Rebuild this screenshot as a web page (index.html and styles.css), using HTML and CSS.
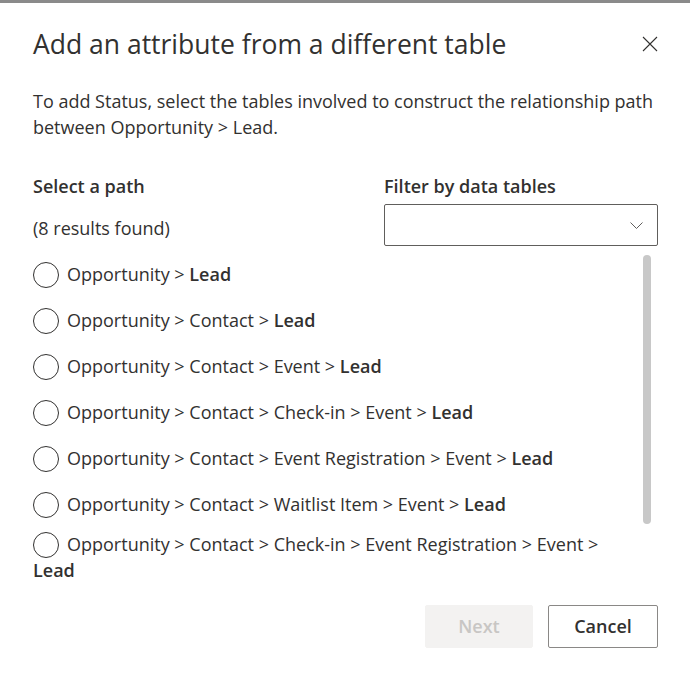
FILE: index.html
```html
<!DOCTYPE html>
<html lang="en">

<head>
  <meta charset="UTF-8">
  <meta name="viewport" content="width=device-width, initial-scale=1.0">
  <title>Add an attribute from a different table</title>
  <link rel="stylesheet" href="styles.css">
</head>

<body>
  <div class="dialog">
    <div class="dialog-head">
      <h1 class="dialog-title">Add an attribute from a different table</h1>
      <a class="close-btn" href="javascript:void(0)" aria-label="Close">
        <svg width="16" height="16" viewBox="0 0 16 16">
          <path d="M1 1 L15 15 M15 1 L1 15" stroke="#323130" stroke-width="1.1" fill="none" />
        </svg>
      </a>
    </div>

    <p class="dialog-desc">To add Status, select the tables involved to construct the relationship path between Opportunity &gt; Lead.</p>

    <div class="picker">
      <div class="label">Select a path</div>
      <div class="label">Filter by data tables</div>
      <div class="count">(8 results found)</div>
      <div class="dropdown">
        <svg width="13" height="7" viewBox="0 0 13 7">
          <path d="M0.5 0.5 L6.5 6.5 L12.5 0.5" stroke="#605e5c" stroke-width="1" fill="none" />
        </svg>
      </div>
    </div>

    <div class="path-list">
      <div class="path-item"><span><i class="radio"></i>Opportunity &gt; <b>Lead</b></span></div>
      <div class="path-item"><span><i class="radio"></i>Opportunity &gt; Contact &gt; <b>Lead</b></span></div>
      <div class="path-item"><span><i class="radio"></i>Opportunity &gt; Contact &gt; Event &gt; <b>Lead</b></span></div>
      <div class="path-item"><span><i class="radio"></i>Opportunity &gt; Contact &gt; Check-in &gt; Event &gt; <b>Lead</b></span></div>
      <div class="path-item"><span><i class="radio"></i>Opportunity &gt; Contact &gt; Event Registration &gt; Event &gt; <b>Lead</b></span></div>
      <div class="path-item"><span><i class="radio"></i>Opportunity &gt; Contact &gt; Waitlist Item &gt; Event &gt; <b>Lead</b></span></div>
      <div class="path-item"><span><i class="radio"></i>Opportunity &gt; Contact &gt; Check-in &gt; Event Registration &gt; Event &gt; <b>Lead</b></span></div>
      <div class="scroll-thumb"></div>
    </div>

    <div class="dialog-foot">
      <button class="btn btn-disabled" disabled>Next</button>
      <button class="btn btn-cancel">Cancel</button>
    </div>
  </div>
</body>

</html>
```

FILE: styles.css
```css
body {
  margin: 0;
  padding: 0;
  background: #fff;
  color: #323130;
  font-family: "Open Sans", "Noto Sans", sans-serif;
  font-size: 18px;
}

.dialog {
  border-top: 3px solid #8a8a8a;
  padding: 0 32px 0 33px;
}

.dialog-head {
  display: flex;
  align-items: center;
  justify-content: space-between;
  padding-top: 25px;
}

.dialog-title {
  margin: 0;
  font-size: 26.5px;
  font-weight: 400;
  line-height: 32px;
}

.close-btn {
  display: flex;
}

.dialog-desc {
  margin: 28px 0 0;
  line-height: 26px;
}

.picker {
  display: grid;
  grid-template-columns: 1fr 274px;
  column-gap: 14px;
  margin-top: 35px;
}

.label {
  font-weight: 600;
  line-height: 22px;
  margin-bottom: 7px;
}

.count {
  align-self: center;
  padding-top: 6px;
}

.dropdown {
  height: 42px;
  box-sizing: border-box;
  border: 1px solid #605e5c;
  border-radius: 2px;
  display: flex;
  align-items: center;
  justify-content: flex-end;
  padding-right: 14px;
}

.path-list {
  position: relative;
  margin-top: 6px;
}

.path-item {
  display: flex;
  align-items: center;
  min-height: 46px;
  box-sizing: border-box;
  padding: 4px 24px 4px 0;
  line-height: 25px;
}

.path-item b {
  font-weight: 600;
}

.radio {
  display: inline-block;
  width: 26px;
  height: 26px;
  box-sizing: border-box;
  border: 1px solid #323130;
  border-radius: 50%;
  vertical-align: middle;
  margin: -3px 8px 0 0;
}

.scroll-thumb {
  position: absolute;
  top: 3px;
  right: 7px;
  width: 8px;
  height: 269px;
  border-radius: 4px;
  background: #c8c8c8;
}

.dialog-foot {
  display: flex;
  justify-content: flex-end;
  gap: 15px;
  margin-top: 18px;
}

.btn {
  height: 43px;
  border: 1px solid #8a8886;
  border-radius: 2px;
  background: #fff;
  color: #323130;
  font-family: inherit;
  font-size: 18px;
  font-weight: 600;
}

.btn-cancel {
  width: 110px;
}

.btn-disabled {
  width: 108px;
  border-color: #f3f2f1;
  background: #f3f2f1;
  color: #c8c6c4;
}
```
